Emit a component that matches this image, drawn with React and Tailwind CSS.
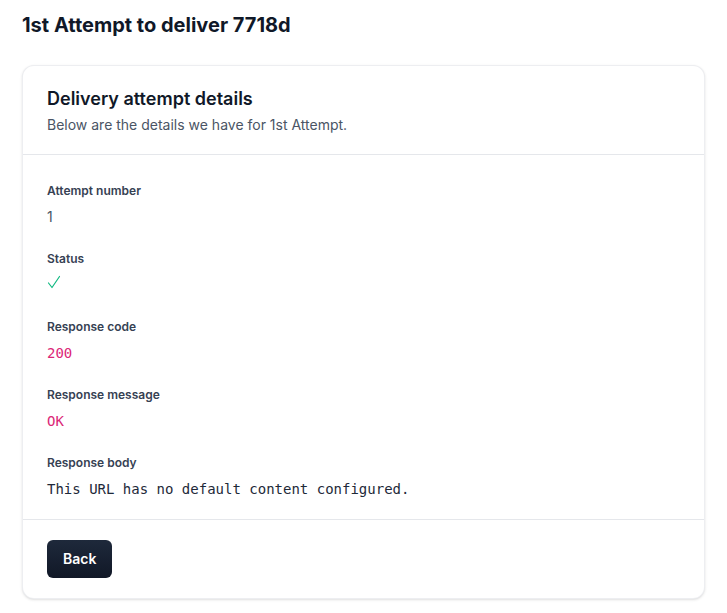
import React from 'react';

const fields = [
  { label: 'Attempt number', value: '1', kind: 'text' },
  { label: 'Status', value: 'ok', kind: 'check' },
  { label: 'Response code', value: '200', kind: 'code' },
  { label: 'Response message', value: 'OK', kind: 'code' },
  { label: 'Response body', value: 'This URL has no default content configured.', kind: 'mono' },
];

const Check = () => (
  <svg width="14" height="15" viewBox="0 0 14 15" className="mt-[4px]">
    <path d="M1.5 8 L5 12.5 L12.5 1.5" fill="none" stroke="#10b981" strokeWidth="1.2" strokeLinecap="round" strokeLinejoin="round" />
  </svg>
);

const FieldValue = ({ field }) => {
  if (field.kind === 'check') return <div className="h-5"><Check /></div>;
  if (field.kind === 'code')
    return <div className="h-5 text-sm leading-5 text-[#db2777] font-['DejaVu_Sans_Mono',monospace]">{field.value}</div>;
  if (field.kind === 'mono')
    return <div className="h-5 text-sm leading-5 text-gray-800 font-['DejaVu_Sans_Mono',monospace]">{field.value}</div>;
  return <div className="h-5 text-sm leading-5 text-gray-600">{field.value}</div>;
};

const App = () => {
  return (
    <div className="min-h-screen bg-white px-[22px] pt-[11px] font-['Inter',sans-serif]">
      <h1 className="text-xl leading-7 font-bold text-gray-900 mb-[26px]">1st Attempt to deliver 7718d</h1>

      <div className="bg-white rounded-xl border border-gray-200/70 shadow-sm">
        <div className="px-6 pt-[19px] pb-[19px] border-b border-gray-200">
          <h2 className="text-lg leading-7 font-semibold text-gray-900">Delivery attempt details</h2>
          <p className="text-sm leading-5 text-gray-600 mt-0.5">Below are the details we have for 1st Attempt.</p>
        </div>

        <div className="px-6 pt-[28px] pb-5 border-b border-gray-200 flex flex-col gap-6">
          {fields.map((field) => (
            <div key={field.label}>
              <div className="text-xs leading-4 font-semibold text-gray-700">{field.label}</div>
              <div className="mt-2">
                <FieldValue field={field} />
              </div>
            </div>
          ))}
        </div>

        <div className="px-6 py-5">
          <button className="h-[38px] px-4 rounded-md bg-gradient-to-b from-[#1e293b] to-[#111827] text-white text-sm font-semibold">
            Back
          </button>
        </div>
      </div>
    </div>
  );
};

export default App;
